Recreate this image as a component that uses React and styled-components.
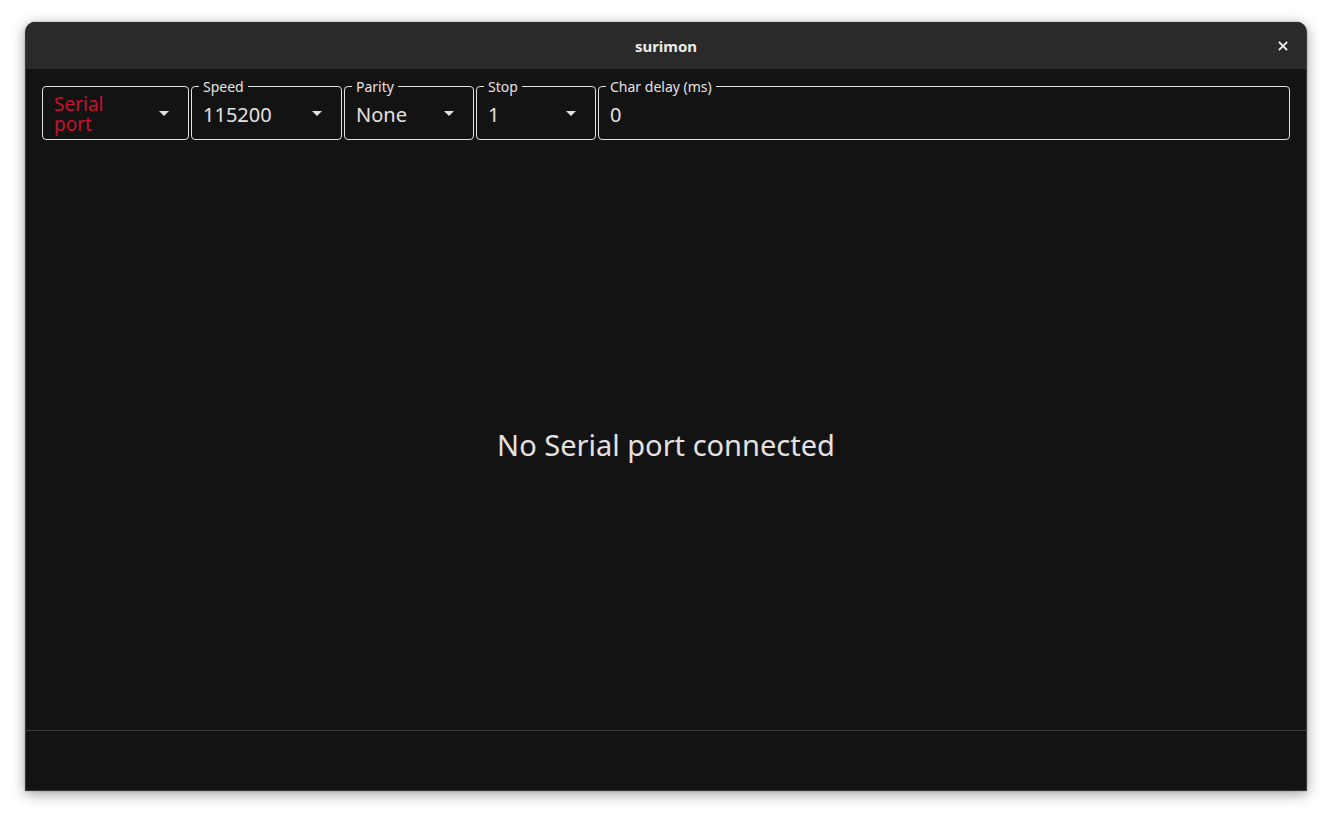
import React from "react";
import styled, { createGlobalStyle } from "styled-components";

const Global = createGlobalStyle`
  html, body { margin: 0; padding: 0; background: #ffffff; }
  body { font-family: "Noto Sans", "DejaVu Sans", sans-serif; }
  * { box-sizing: border-box; }
`;

const Page = styled.div`
  width: 1332px;
  height: 819px;
  padding: 22px 25px 0 25px;
`;

const Window = styled.div`
  width: 1282px;
  height: 769px;
  display: flex;
  flex-direction: column;
  background: #131313;
  border-radius: 10px 10px 0 0;
  border: 1px solid #383838;
  border-top: none;
  box-shadow: 0 3px 14px rgba(0, 0, 0, 0.38), 0 0 2px rgba(0, 0, 0, 0.3);
  overflow: hidden;
`;

const TitleBar = styled.div`
  height: 47px;
  flex: 0 0 47px;
  background: #2a2a2a;
  display: flex;
  align-items: center;
  justify-content: center;
  position: relative;
`;

const Title = styled.div`
  color: #ececec;
  font-weight: 700;
  font-size: 15px;
`;

const CloseButton = styled.div`
  position: absolute;
  right: 16px;
  top: 17px;
  width: 14px;
  height: 14px;
  display: flex;
  align-items: center;
  justify-content: center;
`;

const Content = styled.div`
  flex: 1;
  display: flex;
  flex-direction: column;
  padding: 17px 16px 0 16px;
`;

const FieldRow = styled.div`
  display: flex;
  gap: 2px;
`;

const Field = styled.div`
  position: relative;
  width: ${(p) => (p.$w ? `${p.$w}px` : "auto")};
  flex: ${(p) => (p.$w ? "0 0 auto" : "1")};
  height: 54px;
  border: 1px solid #e2e2e2;
  border-radius: 4px;
  display: flex;
  align-items: center;
  padding: 0 19px 0 11px;
`;

const Legend = styled.span`
  position: absolute;
  left: 7px;
  top: -9px;
  padding: 0 4px;
  background: #131313;
  color: #e6e1e1;
  font-size: 14px;
  line-height: 18px;
`;

const Value = styled.div`
  flex: 1;
  display: flex;
  flex-direction: column;
  color: ${(p) => (p.$placeholder ? "#c8102e" : "#e6e1e1")};
  font-size: ${(p) => (p.$placeholder ? "19px" : "20px")};
  line-height: ${(p) => (p.$placeholder ? "20px" : "24px")};
  margin-top: ${(p) => (p.$placeholder ? "1px" : "3px")};
`;

const Line = styled.span`
  display: block;
  height: 20px;
`;

const Arrow = styled.span`
  width: 0;
  height: 0;
  border-left: 5px solid transparent;
  border-right: 5px solid transparent;
  border-top: 5px solid #e6e1e1;
`;

const Message = styled.div`
  flex: 1;
  display: flex;
  align-items: center;
  justify-content: center;
  padding-top: 18px;
  color: #e6e1e1;
  font-size: 29px;
`;

const Footer = styled.div`
  height: 60px;
  flex: 0 0 60px;
  border-top: 1px solid #3c3c3c;
`;

function Select({ label, value, width, placeholder }) {
  return (
    <Field $w={width}>
      {label && <Legend>{label}</Legend>}
      <Value $placeholder={placeholder}>{value}</Value>
      <Arrow />
    </Field>
  );
}

export default function App() {
  return (
    <>
      <Global />
      <Page>
        <Window>
          <TitleBar>
            <Title>surimon</Title>
            <CloseButton>
              <svg width="10" height="10" viewBox="0 0 10 10">
                <path d="M1.5 1.5L8.5 8.5M8.5 1.5L1.5 8.5" stroke="#ececec" strokeWidth="1.8" strokeLinecap="square" />
              </svg>
            </CloseButton>
          </TitleBar>
          <Content>
            <FieldRow>
              <Select width={147} value={<><Line>Serial</Line><Line>port</Line></>} placeholder />
              <Select width={151} label="Speed" value="115200" />
              <Select width={130} label="Parity" value="None" />
              <Select width={120} label="Stop" value="1" />
              <Field>
                <Legend>Char delay (ms)</Legend>
                <Value>0</Value>
              </Field>
            </FieldRow>
            <Message>No Serial port connected</Message>
          </Content>
          <Footer />
        </Window>
      </Page>
    </>
  );
}
